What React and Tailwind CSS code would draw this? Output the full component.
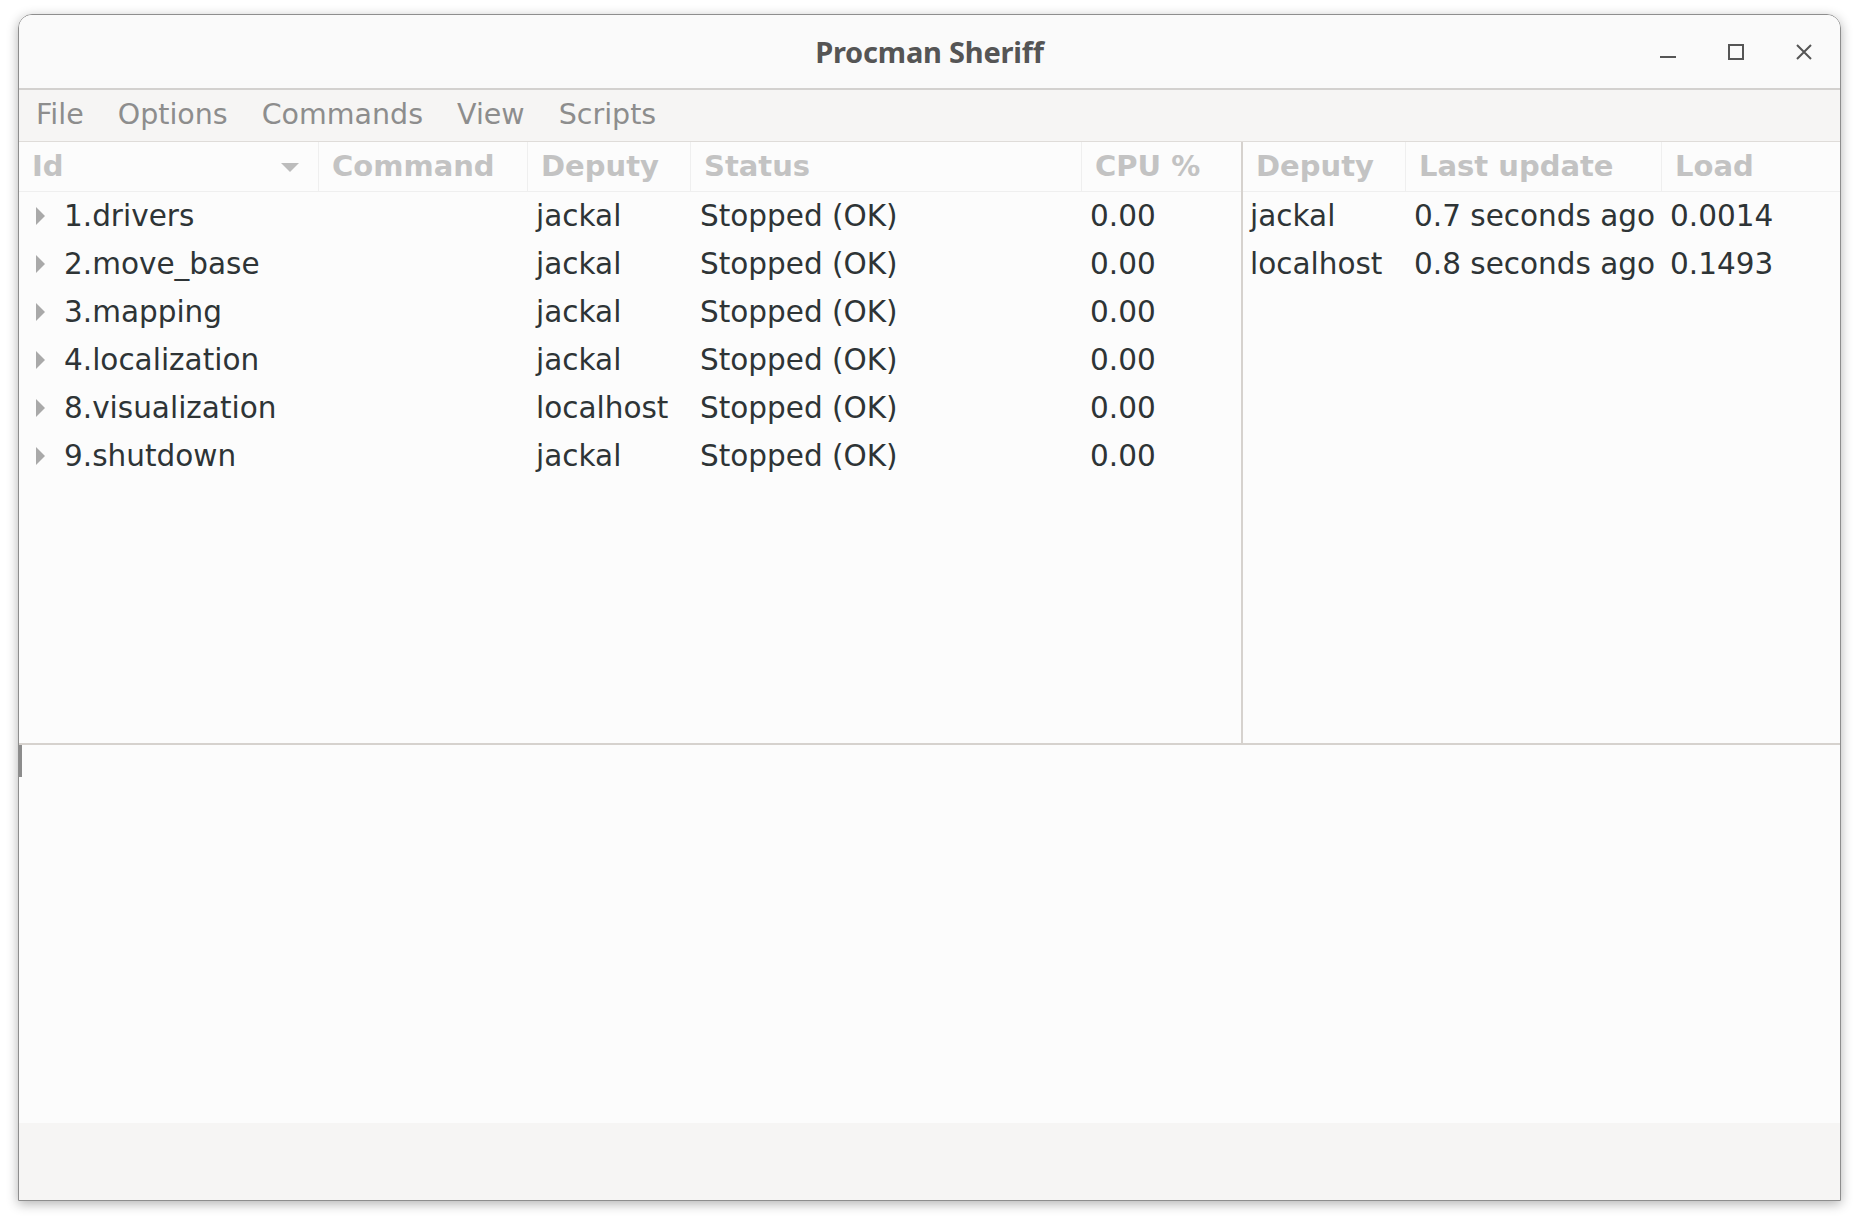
const procs = [
  ['1.drivers', 'jackal'],
  ['2.move_base', 'jackal'],
  ['3.mapping', 'jackal'],
  ['4.localization', 'jackal'],
  ['8.visualization', 'localhost'],
  ['9.shutdown', 'jackal'],
]

const deputies = [
  ['jackal', '0.7 seconds ago', '0.0014'],
  ['localhost', '0.8 seconds ago', '0.1493'],
]

const menus = ['File', 'Options', 'Commands', 'View', 'Scripts']

function HeaderCell({ children, first, className = '' }) {
  return (
    <div
      className={`flex items-center pl-[13px] ${
        first ? '' : 'border-l border-[#efefef]'
      } ${className}`}
    >
      {children}
    </div>
  )
}

function Expander() {
  return (
    <svg width="10" height="20" viewBox="0 0 10 20" className="shrink-0">
      <polygon points="0,1 9,10 0,19" fill="#a9a9a9" />
    </svg>
  )
}

export default function App() {
  return (
    <div className="w-[1860px] h-[1220px] bg-white pt-[14px] pl-[18px] font-['DejaVu_Sans',sans-serif]">
      <div className="w-[1823px] h-[1187px] flex flex-col border border-[#8e8e8e] rounded-t-[14px] overflow-hidden shadow-[0_3px_12px_rgba(0,0,0,0.3)]">
        {/* title bar */}
        <div className="h-[75px] shrink-0 grid grid-cols-[1fr_auto_1fr] items-center bg-[#fafafa] border-b-2 border-[#d3d1cf]">
          <div />
          <div className="font-['Noto_Sans',sans-serif] font-bold text-[29px] text-[#555555] tracking-[-0.2px]">
            Procman Sheriff
          </div>
          <div className="flex items-center justify-end gap-[52px] pr-[28px]">
            <svg width="16" height="16" viewBox="0 0 16 16">
              <line x1="0" y1="13" x2="16" y2="13" stroke="#555" strokeWidth="2" />
            </svg>
            <svg width="16" height="16" viewBox="0 0 16 16">
              <rect x="1" y="1" width="14" height="14" fill="none" stroke="#555" strokeWidth="2" />
            </svg>
            <svg width="16" height="16" viewBox="0 0 16 16">
              <path d="M1 1 L15 15 M15 1 L1 15" stroke="#555" strokeWidth="2" />
            </svg>
          </div>
        </div>

        {/* menu bar */}
        <div className="h-[52px] shrink-0 flex items-center gap-[34px] pl-[17px] bg-[#f6f5f4] border-b border-[#dfdcd9] text-[28.5px] text-[#8d8d8d]">
          {menus.map((m) => (
            <span key={m}>{m}</span>
          ))}
        </div>

        {/* upper panes */}
        <div className="h-[601px] shrink-0 flex bg-[#fcfcfc]">
          <div className="w-[1222px] shrink-0">
            <div className="h-[50px] grid grid-cols-[299px_209px_163px_391px_1fr] border-b border-[#efefef] text-[29px] font-bold text-[#c3c3c3]">
              <HeaderCell first className="justify-between pr-[18px]">
                <span>Id</span>
                <svg width="20" height="10" viewBox="0 0 20 10">
                  <polygon points="1,1 19,1 10,10" fill="#bcbcbc" />
                </svg>
              </HeaderCell>
              <HeaderCell>Command</HeaderCell>
              <HeaderCell>Deputy</HeaderCell>
              <HeaderCell>Status</HeaderCell>
              <HeaderCell>CPU %</HeaderCell>
            </div>
            {procs.map(([id, dep]) => (
              <div
                key={id}
                className="h-[48px] grid grid-cols-[299px_209px_163px_391px_1fr] items-center text-[29.5px] text-[#2e3436]"
              >
                <div className="flex items-center gap-[18px] pl-[17px]">
                  <Expander />
                  <span>{id}</span>
                </div>
                <div />
                <div className="pl-[9px]">{dep}</div>
                <div className="pl-[10px]">Stopped (OK)</div>
                <div className="pl-[9px]">0.00</div>
              </div>
            ))}
          </div>

          <div className="w-[2px] shrink-0 bg-[#d6d2ce]" />

          <div className="flex-1">
            <div className="h-[50px] grid grid-cols-[162px_256px_1fr] border-b border-[#efefef] text-[29px] font-bold text-[#c3c3c3]">
              <HeaderCell first>Deputy</HeaderCell>
              <HeaderCell>Last update</HeaderCell>
              <HeaderCell>Load</HeaderCell>
            </div>
            {deputies.map(([name, upd, load]) => (
              <div
                key={name}
                className="h-[48px] grid grid-cols-[162px_256px_1fr] items-center text-[29.5px] text-[#2e3436]"
              >
                <div className="pl-[7px]">{name}</div>
                <div className="pl-[9px]">{upd}</div>
                <div className="pl-[9px]">{load}</div>
              </div>
            ))}
          </div>
        </div>

        {/* pane separator */}
        <div className="h-[2px] shrink-0 bg-[#d6d2ce]" />

        {/* output text view */}
        <div className="h-[378px] shrink-0 bg-[#fcfcfc]">
          <div className="w-[3px] h-[32px] bg-[#8c8c8c]" />
        </div>

        {/* status bar */}
        <div className="flex-1 bg-[#f6f5f4]" />
      </div>
    </div>
  )
}
